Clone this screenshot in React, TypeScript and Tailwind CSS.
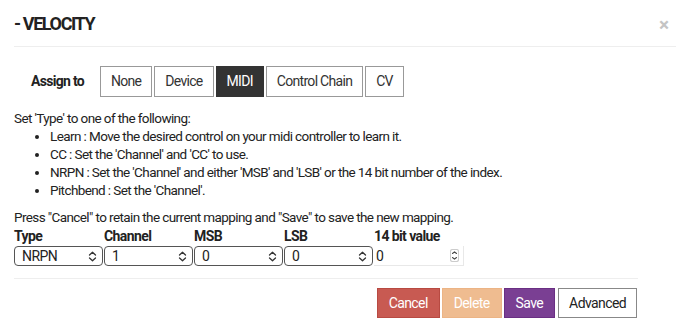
import React from "react";

const Chevrons = () => (
  <svg width="9" height="11" viewBox="0 0 9 11" fill="none" stroke="#333" strokeWidth="1.3" strokeLinecap="round" strokeLinejoin="round">
    <path d="M1.5 4 L4.5 1.2 L7.5 4" />
    <path d="M1.5 7 L4.5 9.8 L7.5 7" />
  </svg>
);

const Select = ({ value }: { value: string }) => (
  <div className="w-[89px] h-[20px] border border-[#555] rounded-[4px] flex items-center justify-between pl-[7px] pr-[5px] text-[14px] text-[#222] leading-none">
    <span>{value}</span>
    <Chevrons />
  </div>
);

export default function App() {
  const assign = ["None", "Device", "MIDI", "Control Chain", "CV"];
  return (
    <div
      className="w-[690px] h-[331px] bg-white relative overflow-hidden text-[#222]"
      style={{ fontFamily: "Roboto, 'Liberation Sans', sans-serif" }}
    >
      <div className="mx-[14px] h-[47px] border-b border-[#eeeeee] flex items-center">
        <h1 className="text-[18px] font-bold tracking-[-1.4px] text-[#222] mt-[0px]">- VELOCITY</h1>
      </div>
      <button className="absolute right-[21px] top-[15px] text-[#c4c4c4] text-[19px] font-bold leading-none">×</button>

      <div className="px-[14px]">
        <div className="flex items-center mt-[19px] pl-[17px]">
          <span className="text-[14px] font-bold w-[69px] tracking-[-0.7px]">Assign to</span>
          <div className="flex gap-[2px]">
            {assign.map((a) => (
              <div
                key={a}
                className={
                  "h-[31px] px-[10px] flex items-center text-[14px] border tracking-[-0.7px] " +
                  (a === "MIDI" ? "bg-[#333] text-white border-[#333]" : "bg-white text-[#333] border-[#999]")
                }
              >
                {a}
              </div>
            ))}
          </div>
        </div>

        <div className="mt-[12px] text-[13.5px] leading-[18px] tracking-[-0.6px]">
          <p>Set 'Type' to one of the following:</p>
          <ul className="pl-[36px] list-disc">
            <li>Learn : Move the desired control on your midi controller to learn it.</li>
            <li>CC : Set the 'Channel' and 'CC' to use.</li>
            <li>NRPN : Set the 'Channel' and either 'MSB' and 'LSB' or the 14 bit number of the index.</li>
            <li>Pitchbend : Set the 'Channel'.</li>
          </ul>
          <p className="mt-[9px]">Press "Cancel" to retain the current mapping and "Save" to save the new mapping.</p>
        </div>

        <div className="flex gap-[1px] text-[14px] tracking-[-0.6px] mt-[1px]">
          {[
            ["Type", "NRPN"],
            ["Channel", "1"],
            ["MSB", "0"],
            ["LSB", "0"],
          ].map(([l, v]) => (
            <div key={l} className="flex flex-col">
              <span className="font-bold leading-[19px]">{l}</span>
              <Select value={v} />
            </div>
          ))}
          <div className="flex flex-col">
            <span className="font-bold leading-[19px]">14 bit value</span>
            <div className="w-[90px] h-[20px] border-b border-r border-[#e8e8e8] flex items-center justify-between pl-[2px] pr-[4px] leading-none">
              <span>0</span>
              <svg width="9" height="13" viewBox="0 0 9 13" fill="none" stroke="#444" strokeWidth="1.1" strokeLinecap="round" strokeLinejoin="round">
                <rect x="0.5" y="0.5" width="8" height="12" rx="2" stroke="#ccc" />
                <path d="M2.5 4.5 L4.5 2.8 L6.5 4.5" />
                <path d="M2.5 8.5 L4.5 10.2 L6.5 8.5" />
              </svg>
            </div>
          </div>
        </div>

        <div className="w-[624px] border-b border-[#eeeeee] mt-[12px]" />

        <div className="w-[623px] flex justify-end gap-[2px] mt-[9px] text-[14px] tracking-[-0.6px]">
          <div className="h-[30px] px-[11px] flex items-center bg-[#c85a52] border border-[#b84a42] text-white">Cancel</div>
          <div className="h-[30px] px-[11px] flex items-center bg-[#efbc90] border border-[#ecb485] text-white">Delete</div>
          <div className="h-[30px] px-[11px] flex items-center bg-[#7a3f93] border border-[#6a2f83] text-white">Save</div>
          <div className="h-[30px] px-[10px] flex items-center bg-white border border-[#888] text-[#222] ml-[1px]">Advanced</div>
        </div>
      </div>
    </div>
  );
}
